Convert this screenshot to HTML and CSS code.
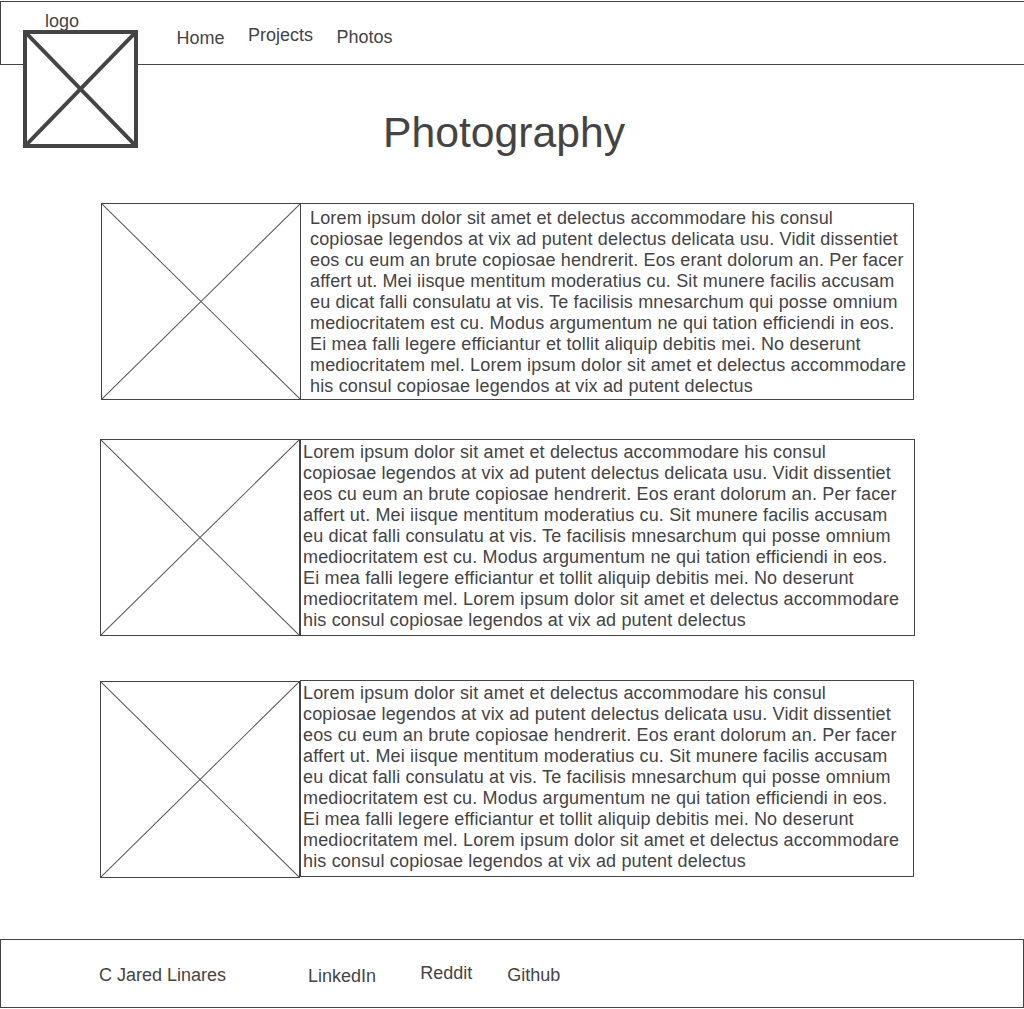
FILE: index.html
```html
<html>
<head>
  <meta charset="UTF-8">
  <title>Photography</title>
  <link rel="stylesheet" href="styles.css">
</head>
<body>

  <header class="cabecera">
    <div class="logo">
      <span class="logo-texto">logo</span>
      <div class="logo-caja">
        <svg viewBox="0 0 107 110" preserveAspectRatio="none">
          <line x1="0" y1="0" x2="107" y2="110" />
          <line x1="107" y1="0" x2="0" y2="110" />
        </svg>
      </div>
    </div>
    <nav class="menu">
      <a href="#" class="home">Home</a>
      <a href="#" class="projects">Projects</a>
      <a href="#" class="photos">Photos</a>
    </nav>
  </header>

  <h1 class="titulo">Photography</h1>

  <main class="galeria">
    <div class="tarjeta tarjeta-uno">
      <div class="foto">
        <svg viewBox="0 0 100 100" preserveAspectRatio="none">
          <line x1="0" y1="0" x2="100" y2="100" />
          <line x1="100" y1="0" x2="0" y2="100" />
        </svg>
      </div>
      <p class="texto">Lorem ipsum dolor sit amet et delectus accommodare his consul copiosae legendos at vix ad putent delectus delicata usu. Vidit dissentiet eos cu eum an brute copiosae hendrerit. Eos erant dolorum an. Per facer affert ut. Mei iisque mentitum moderatius cu. Sit munere facilis accusam eu dicat falli consulatu at vis. Te facilisis mnesarchum qui posse omnium mediocritatem est cu. Modus argumentum ne qui tation efficiendi in eos. Ei mea falli legere efficiantur et tollit aliquip debitis mei. No deserunt mediocritatem mel. Lorem ipsum dolor sit amet et delectus accommodare his consul copiosae legendos at vix ad putent delectus</p>
    </div>

    <div class="tarjeta tarjeta-dos">
      <div class="foto">
        <svg viewBox="0 0 100 100" preserveAspectRatio="none">
          <line x1="0" y1="0" x2="100" y2="100" />
          <line x1="100" y1="0" x2="0" y2="100" />
        </svg>
      </div>
      <p class="texto">Lorem ipsum dolor sit amet et delectus accommodare his consul copiosae legendos at vix ad putent delectus delicata usu. Vidit dissentiet eos cu eum an brute copiosae hendrerit. Eos erant dolorum an. Per facer affert ut. Mei iisque mentitum moderatius cu. Sit munere facilis accusam eu dicat falli consulatu at vis. Te facilisis mnesarchum qui posse omnium mediocritatem est cu. Modus argumentum ne qui tation efficiendi in eos. Ei mea falli legere efficiantur et tollit aliquip debitis mei. No deserunt mediocritatem mel. Lorem ipsum dolor sit amet et delectus accommodare his consul copiosae legendos at vix ad putent delectus</p>
    </div>

    <div class="tarjeta tarjeta-tres">
      <div class="foto">
        <svg viewBox="0 0 100 100" preserveAspectRatio="none">
          <line x1="0" y1="0" x2="100" y2="100" />
          <line x1="100" y1="0" x2="0" y2="100" />
        </svg>
      </div>
      <p class="texto">Lorem ipsum dolor sit amet et delectus accommodare his consul copiosae legendos at vix ad putent delectus delicata usu. Vidit dissentiet eos cu eum an brute copiosae hendrerit. Eos erant dolorum an. Per facer affert ut. Mei iisque mentitum moderatius cu. Sit munere facilis accusam eu dicat falli consulatu at vis. Te facilisis mnesarchum qui posse omnium mediocritatem est cu. Modus argumentum ne qui tation efficiendi in eos. Ei mea falli legere efficiantur et tollit aliquip debitis mei. No deserunt mediocritatem mel. Lorem ipsum dolor sit amet et delectus accommodare his consul copiosae legendos at vix ad putent delectus</p>
    </div>
  </main>

  <footer class="pie">
    <span class="autor">C Jared Linares</span>
    <a href="#" class="linkedin">LinkedIn</a>
    <a href="#" class="reddit">Reddit</a>
    <a href="#" class="github">Github</a>
  </footer>

</body>
</html>
```

FILE: styles.css
```css
body {
  margin: 0;
  padding-top: 1px;
  font-family: 'Liberation Sans', Arial, sans-serif;
  font-size: 18px;
  color: #444;
  background-color: white;
  overflow-x: hidden;
}

a {
  color: #444;
  text-decoration: none;
}

/* Cabecera */
.cabecera {
  display: flex;
  align-items: flex-start;
  height: 62px;
  border: 1px solid #444;
  border-right: none;
}

.logo {
  display: flex;
  flex-direction: column;
  margin-left: 22px;
  margin-top: 8px;
}

.logo-texto {
  line-height: 22px;
  margin-bottom: -2px;
  padding-left: 22px;
}

.logo-caja {
  width: 115px;
  height: 118px;
  box-sizing: border-box;
  border: 4px solid #444;
  background-color: white;
}

.logo-caja svg {
  display: block;
  width: 100%;
  height: 100%;
}

.logo-caja line {
  stroke: #444;
  stroke-width: 4;
  vector-effect: non-scaling-stroke;
}

.menu {
  display: flex;
  gap: 23.5px;
  margin-left: 38.5px;
}

.menu a {
  line-height: 21px;
}

.home {
  padding-top: 26px;
}

.projects {
  padding-top: 23px;
}

.photos {
  padding-top: 25px;
}

/* Titulo */
.titulo {
  font-size: 42.7px;
  font-weight: normal;
  line-height: 48px;
  text-align: center;
  margin: 43px 0 0 0;
  padding-right: 16px;
}

/* Tarjetas */
.galeria {
  padding-left: 100px;
  margin-top: 47px;
}

.tarjeta {
  display: flex;
  align-items: flex-start;
}

.foto {
  width: 200px;
  height: 197px;
  box-sizing: border-box;
  border: 1px solid #444;
  flex-shrink: 0;
}

.foto svg {
  display: block;
  width: 100%;
  height: 100%;
}

.foto line {
  stroke: #555;
  stroke-width: 1;
  vector-effect: non-scaling-stroke;
}

.texto {
  margin: 0;
  box-sizing: border-box;
  height: 197px;
  border: 1px solid #444;
  line-height: 21px;
  letter-spacing: 0.16px;
  padding: 2px 12px 0 2px;
}

.tarjeta-uno {
  margin-left: 1px;
}

.tarjeta-uno .texto {
  width: 614px;
  margin-left: -1px;
  padding: 4px 4px 0 9px;
}

.tarjeta-dos {
  margin-top: 39px;
}

.tarjeta-dos .texto {
  width: 615px;
}

.tarjeta-tres {
  margin-top: 44px;
}

.tarjeta-tres .foto {
  margin-top: 1px;
}

.tarjeta-tres .texto {
  width: 614px;
}

/* Pie */
.pie {
  display: flex;
  align-items: flex-start;
  height: 67px;
  margin-top: 61px;
  border: 1px solid #444;
  padding-left: 98px;
}

.pie span,
.pie a {
  line-height: 21px;
}

.autor {
  padding-top: 25px;
}

.linkedin {
  margin-left: 82px;
  padding-top: 26px;
}

.reddit {
  margin-left: 44px;
  padding-top: 23px;
}

.github {
  margin-left: 35px;
  padding-top: 25px;
}
```
